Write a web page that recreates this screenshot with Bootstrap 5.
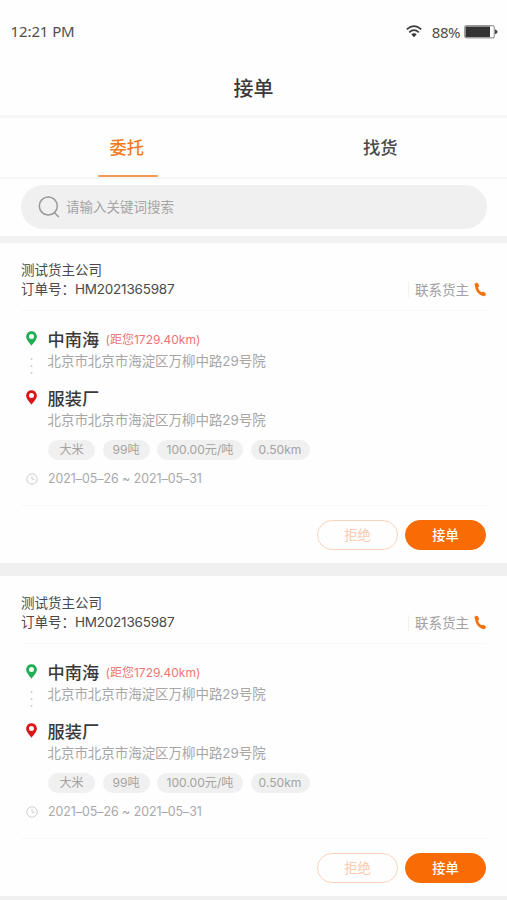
<!DOCTYPE html>
<html lang="zh-CN">
<head>
<meta charset="utf-8">
<meta name="viewport" content="width=device-width, initial-scale=1">
<title>接单</title>
<link href="https://cdn.jsdelivr.net/npm/bootstrap@5.3.0/dist/css/bootstrap.min.css" rel="stylesheet">
<style>
body{font-family:Inter,"Noto Sans CJK SC",sans-serif;font-size:13.5px;color:#4a4a4a;background:#fefefe;height:900px;overflow:hidden}
svg{display:block;flex:none}
.status{height:63px;padding:0 9px 0 10.5px;font-family:"Noto Sans",sans-serif;font-size:15px;color:#4f4f4f}
.status-time{letter-spacing:-.1px}
.status-pct{font-size:15px;letter-spacing:-.5px;margin:1px 4px 0 10px}
.page-title{height:52px;font-size:20px;font-weight:500;color:#3a3a3a;line-height:52px}
.tabs{height:64px;border-top:3px solid #f6f6f6;border-bottom:2px solid #f7f7f7}
.tab-item{font-size:17.3px;font-weight:500;color:#4a4a4a;line-height:59px;height:61px;flex:1}
.tab-item.active{color:#f37b21}
.tab-item.active::after{content:"";display:block;width:60px;height:2px;border-radius:1px;background:#f09a55;margin:-2px auto 0;position:relative;left:1px}
.search-wrap{height:57px;padding:5.5px 20px 0 21px}
.search-box{height:44px;background:#f0f0f0;padding-left:17px;color:#a5a5a5}
.search-hint{margin:1px 0 0 6px}
.gap-bar{height:7px;background:#f1f1f1}
.orders{background:#f0f0f0;border-bottom:4px solid #f0f0f0}
.order{height:320px;padding:0 21px 0 21px;background:#fefefe}
.order + .order{margin-top:13px}
.order-head{height:68px;padding-top:17.5px;line-height:19.5px;border-bottom:1px solid #f8f8f8}
.num{letter-spacing:-.22px}
.contact{color:#a0a0a0;height:16px;line-height:16px;border-left:1px solid #f1f1f1;padding-left:6px;margin-bottom:12.5px}
.contact svg{margin-left:5px}
.route{padding-top:16px}
.stop{height:58.5px;padding-left:4.5px}
.pin-col{width:22px}
.pin-col svg:first-child{margin-top:4px}
.dots{margin-top:11px}
.place{font-size:17.2px;line-height:25px;font-weight:500;color:#3a3a3a}
.dist{font-size:12px;line-height:25px;color:#ee7474;margin-left:6.5px}
.addr{line-height:19px;letter-spacing:-.05px;color:#a6a6a6}
.tags{padding-left:27px;gap:7.5px;margin-top:-4px}
.tag{height:20px;line-height:20px;font-size:12.1px;background:#f0f0f0;color:#a3a3a3;width:47px;text-align:center}
.tag:nth-child(3){width:86px}
.tag:nth-child(4){width:59px}
.when{color:#a8a8a8;font-size:12.4px;line-height:18px;margin-top:10px;padding-left:5px}
.dates{margin-left:10px;letter-spacing:-.03px}
.order-foot{margin-top:17px;border-top:1px solid #f8f8f8;padding-top:14px;gap:7px}
.pill{width:81px;height:30px;font-size:13.3px;line-height:28px;padding:0;border:1px solid #f96c05}
.pill-no,.pill-no:hover{border-color:#fbd3bd;color:#fbcbb0;background:#fefefe}
.pill-yes,.pill-yes:hover{background:#f96c05;color:#fff;font-weight:500}
</style>
<script src="https://cdn.jsdelivr.net/npm/bootstrap@5.3.0/dist/js/bootstrap.bundle.min.js"></script>
</head>
<body>
<svg width="0" height="0" class="position-absolute" aria-hidden="true">
  <symbol id="pin" viewBox="0 0 11 15"><path fill="currentColor" fill-rule="evenodd" d="M5.500.3A5.300 5.300 0 0 0 .1 5.500C.1 8.900 4 12.300 5.500 14.700 7 12.300 10.900 8.900 10.900 5.500A5.300 5.300 0 0 0 5.500.3ZM5.500 3a2.500 2.500 0 1 1 0 5 2.500 2.500 0 0 1 0-5Z"/></symbol>
  <symbol id="phone" viewBox="0 0 12 15"><path d="M2.500 3.200C2.300 7.800 5.200 11.900 9.600 12.400" fill="none" stroke="#f0730f" stroke-width="2.700"/><path d="M2.500 2.700 3.100 3.800M8.900 11.700 9.900 12.200" fill="none" stroke="#f0730f" stroke-width="3.800" stroke-linecap="round"/></symbol>
  <symbol id="clock" viewBox="0 0 12 12"><g fill="none" stroke="#cfcfcf"><circle cx="6" cy="6" r="5.200"/><path d="M6 2.800V6.300H8.800"/></g></symbol>
</svg>

<header>
  <div class="status d-flex align-items-center">
    <span class="status-time me-auto">12:21 PM</span>
    <svg width="16" height="13" viewBox="0 0 16 13"><g fill="none" stroke="#3c3c3c" stroke-width="1.700"><path d="M.8 4.300Q8-1.900 15.200 4.300"/><path d="M3.200 7.300Q8 3.100 12.800 7.300"/></g><path fill="#333" d="M5.300 9.300Q8 7.300 10.700 9.300L8 12.300Z"/></svg>
    <span class="status-pct">88%</span>
    <svg width="34" height="14" viewBox="0 0 34 14"><rect x=".7" y=".7" width="29.600" height="12.200" rx="2" fill="#fff" stroke="#999" stroke-width="1.200"/><rect x="1.500" y="1.500" width="24.500" height="10.600" fill="#333"/><path fill="#444" d="M31 4.300q2.600 1 2.600 2.500T31 9.300Z"/></svg>
  </div>
  <h1 class="page-title text-center m-0">接单</h1>
</header>

<nav class="tabs d-flex text-center">
  <div class="tab-item active">委托</div>
  <div class="tab-item">找货</div>
</nav>

<div class="search-wrap">
  <div class="search-box rounded-pill d-flex align-items-center">
    <svg width="22" height="22" viewBox="0 0 22 22" fill="none" stroke="#999" stroke-width="1.500"><circle cx="10.300" cy="10" r="9"/><path d="M16.300 16.500 20.800 21"/></svg>
    <span class="search-hint">请输入关键词搜索</span>
  </div>
</div>
<div class="gap-bar"></div>

<main class="orders">
  <section class="order">
    <div class="order-head d-flex justify-content-between align-items-end">
      <div class="align-self-start"><div>测试货主公司</div><div>订单号：<span class="num">HM2021365987</span></div></div>
      <div class="contact d-flex align-items-center">联系货主<svg width="12" height="15"><use href="#phone"/></svg></div>
    </div>
    <div class="route">
      <div class="stop d-flex">
        <div class="pin-col"><svg width="11" height="15" color="#1eae54"><use href="#pin"/></svg><svg class="dots" width="11" height="18" fill="#ccc"><circle cx="5.500" cy="2" r="1"/><circle cx="5.500" cy="9" r="1"/><circle cx="5.500" cy="16" r="1"/></svg></div>
        <div><div class="d-flex"><span class="place">中南海</span><span class="dist">(距您1729.40km)</span></div><div class="addr">北京市北京市海淀区万柳中路29号院</div></div>
      </div>
      <div class="stop d-flex">
        <div class="pin-col"><svg width="11" height="15" color="#dc1616"><use href="#pin"/></svg></div>
        <div><div class="place">服装厂</div><div class="addr">北京市北京市海淀区万柳中路29号院</div></div>
      </div>
    </div>
    <div class="tags d-flex"><span class="tag rounded-pill">大米</span><span class="tag rounded-pill">99吨</span><span class="tag rounded-pill">100.00元/吨</span><span class="tag rounded-pill">0.50km</span></div>
    <div class="when d-flex align-items-center"><svg width="12" height="12"><use href="#clock"/></svg><span class="dates">2021–05–26 ~ 2021–05–31</span></div>
    <div class="order-foot d-flex justify-content-end"><button class="btn rounded-pill pill pill-no">拒绝</button><button class="btn rounded-pill pill pill-yes">接单</button></div>
  </section>
  <section class="order">
    <div class="order-head d-flex justify-content-between align-items-end">
      <div class="align-self-start"><div>测试货主公司</div><div>订单号：<span class="num">HM2021365987</span></div></div>
      <div class="contact d-flex align-items-center">联系货主<svg width="12" height="15"><use href="#phone"/></svg></div>
    </div>
    <div class="route">
      <div class="stop d-flex">
        <div class="pin-col"><svg width="11" height="15" color="#1eae54"><use href="#pin"/></svg><svg class="dots" width="11" height="18" fill="#ccc"><circle cx="5.500" cy="2" r="1"/><circle cx="5.500" cy="9" r="1"/><circle cx="5.500" cy="16" r="1"/></svg></div>
        <div><div class="d-flex"><span class="place">中南海</span><span class="dist">(距您1729.40km)</span></div><div class="addr">北京市北京市海淀区万柳中路29号院</div></div>
      </div>
      <div class="stop d-flex">
        <div class="pin-col"><svg width="11" height="15" color="#dc1616"><use href="#pin"/></svg></div>
        <div><div class="place">服装厂</div><div class="addr">北京市北京市海淀区万柳中路29号院</div></div>
      </div>
    </div>
    <div class="tags d-flex"><span class="tag rounded-pill">大米</span><span class="tag rounded-pill">99吨</span><span class="tag rounded-pill">100.00元/吨</span><span class="tag rounded-pill">0.50km</span></div>
    <div class="when d-flex align-items-center"><svg width="12" height="12"><use href="#clock"/></svg><span class="dates">2021–05–26 ~ 2021–05–31</span></div>
    <div class="order-foot d-flex justify-content-end"><button class="btn rounded-pill pill pill-no">拒绝</button><button class="btn rounded-pill pill pill-yes">接单</button></div>
  </section>
</main>
</body>
</html>
